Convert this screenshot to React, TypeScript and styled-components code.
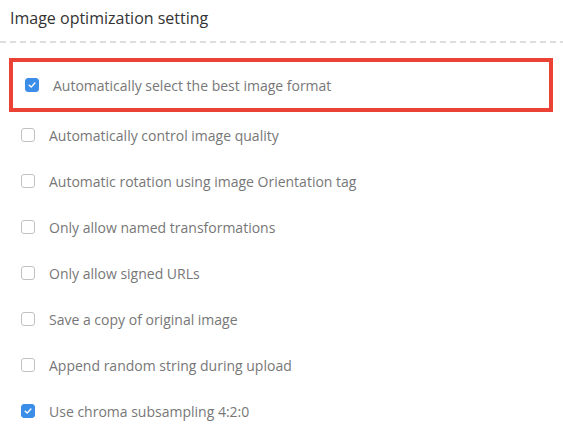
import React, { useState } from 'react';
import styled, { createGlobalStyle } from 'styled-components';

const GlobalStyle = createGlobalStyle`
  html, body {
    margin: 0;
    padding: 0;
    background: #ffffff;
  }
  body {
    font-family: 'Open Sans', 'Noto Sans', sans-serif;
  }
`;

const Panel = styled.div`
  width: 563px;
`;

const Title = styled.div`
  height: 41px;
  padding-left: 10px;
  font-size: 16px;
  line-height: 36px;
  color: #333333;
`;

const DashedRule = styled.div`
  height: 2px;
  background-image: repeating-linear-gradient(
    to right,
    #dddddd 0,
    #dddddd 6px,
    transparent 6px,
    transparent 10px
  );
`;

const OptionList = styled.div`
  display: flex;
  flex-direction: column;
  padding-top: 15px;
`;

const Highlight = styled.div`
  margin: 0 10px 0 9px;
  border: 4px solid #ea4335;
`;

const Row = styled.label<{ $inset: number }>`
  display: flex;
  align-items: center;
  gap: 14px;
  height: 46px;
  padding-left: ${props => props.$inset}px;
  cursor: pointer;
  user-select: none;
`;

const Box = styled.span<{ $checked: boolean }>`
  display: flex;
  align-items: center;
  justify-content: center;
  box-sizing: border-box;
  width: 14px;
  height: 14px;
  border-radius: 3px;
  border: 1px solid ${props => (props.$checked ? '#3a8ee8' : '#c2c2c2')};
  background-color: ${props => (props.$checked ? '#3a8ee8' : '#ffffff')};
  flex-shrink: 0;
`;

const LabelText = styled.span`
  font-size: 14px;
  color: #777777;
  white-space: nowrap;
`;

interface Option {
  label: string;
  checked: boolean;
}

const initialOptions: Option[] = [
  { label: 'Automatically select the best image format', checked: true },
  { label: 'Automatically control image quality', checked: false },
  { label: 'Automatic rotation using image Orientation tag', checked: false },
  { label: 'Only allow named transformations', checked: false },
  { label: 'Only allow signed URLs', checked: false },
  { label: 'Save a copy of original image', checked: false },
  { label: 'Append random string during upload', checked: false },
  { label: 'Use chroma subsampling 4:2:0', checked: true },
];

const CheckIcon = () => (
  <svg width="10" height="10" viewBox="0 0 10 10">
    <polyline
      points="2.2,5.2 4.2,7.1 7.9,3"
      fill="none"
      stroke="#ffffff"
      strokeWidth="1.4"
      strokeLinecap="round"
      strokeLinejoin="round"
    />
  </svg>
);

const OptionRow: React.FC<{ option: Option; inset: number; onToggle: () => void }> = ({
  option,
  inset,
  onToggle,
}) => (
  <Row $inset={inset} onClick={onToggle}>
    <Box $checked={option.checked}>{option.checked && <CheckIcon />}</Box>
    <LabelText>{option.label}</LabelText>
  </Row>
);

const App: React.FC = () => {
  const [options, setOptions] = useState<Option[]>(initialOptions);

  const toggle = (index: number) => {
    setOptions(prev => prev.map((o, i) => (i === index ? { ...o, checked: !o.checked } : o)));
  };

  return (
    <Panel>
      <GlobalStyle />
      <Title>Image optimization setting</Title>
      <DashedRule />
      <OptionList>
        {options.map((option, index) =>
          index === 0 ? (
            <Highlight key={option.label}>
              <OptionRow option={option} inset={12} onToggle={() => toggle(index)} />
            </Highlight>
          ) : (
            <OptionRow key={option.label} option={option} inset={21} onToggle={() => toggle(index)} />
          )
        )}
      </OptionList>
    </Panel>
  );
};

export default App;
